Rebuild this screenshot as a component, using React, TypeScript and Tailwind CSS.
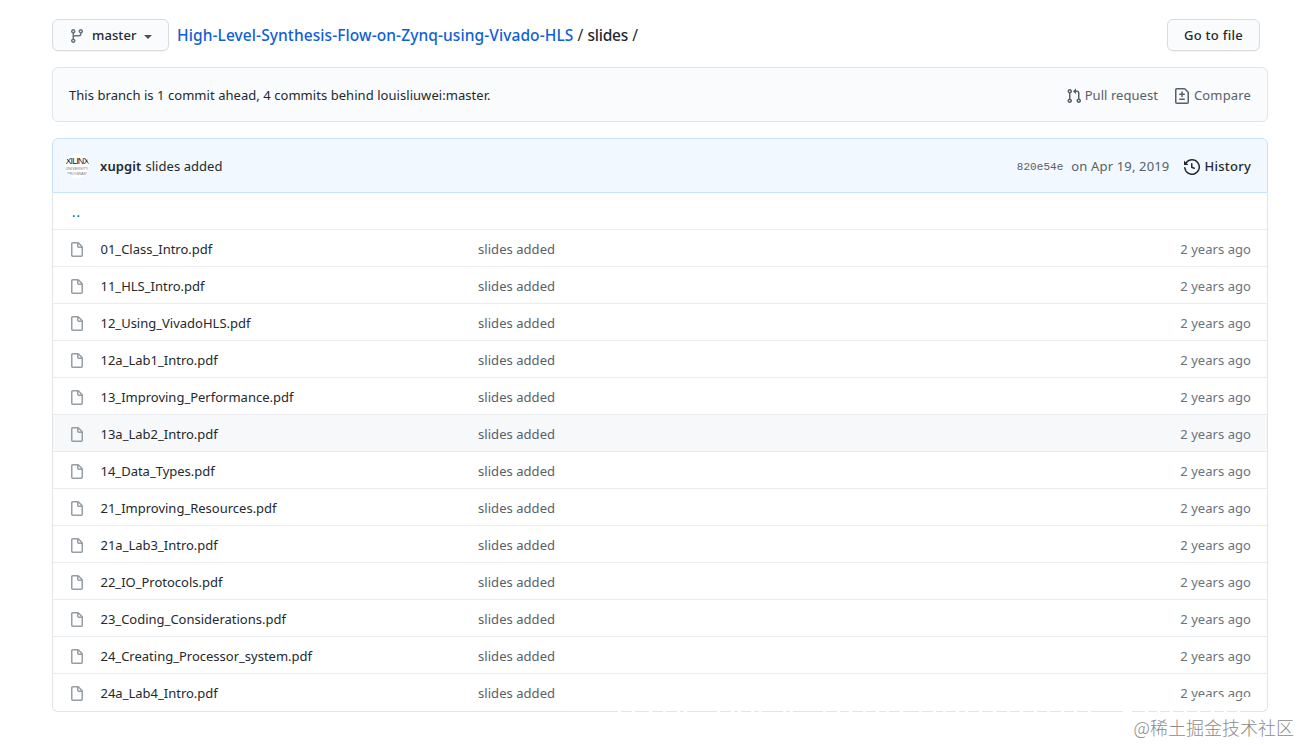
import React from 'react';

const files = [
  '01_Class_Intro.pdf',
  '11_HLS_Intro.pdf',
  '12_Using_VivadoHLS.pdf',
  '12a_Lab1_Intro.pdf',
  '13_Improving_Performance.pdf',
  '13a_Lab2_Intro.pdf',
  '14_Data_Types.pdf',
  '21_Improving_Resources.pdf',
  '21a_Lab3_Intro.pdf',
  '22_IO_Protocols.pdf',
  '23_Coding_Considerations.pdf',
  '24_Creating_Processor_system.pdf',
  '24a_Lab4_Intro.pdf',
];

// breaks in the bottom border, from its left end
const gaps = [
  0, 14, 31, 45, 59, 66, 99, 113, 120, 133, 141, 165, 172, 205, 219, 231, 245, 258, 268, 282, 301, 315, 325, 338, 347, 361,
  375, 389, 402, 416, 429, 443, 456, 470, 505, 508, 511, 527, 539, 552, 566, 579, 593, 606, 619,
];

const icons = {
  branch:
    'M11.75 2.5a.75.75 0 100 1.5.75.75 0 000-1.5zm-2.25.75a2.25 2.25 0 113 2.122V6A2.5 2.5 0 0110 8.5H6a1 1 0 00-1 1v1.128a2.251 2.251 0 11-1.5 0V5.372a2.25 2.25 0 111.5 0v1.836A2.492 2.492 0 016 7h4a1 1 0 001-1v-.628A2.25 2.25 0 019.5 3.25zM4.25 12a.75.75 0 100 1.5.75.75 0 000-1.5zM3.5 3.25a.75.75 0 111.5 0 .75.75 0 01-1.5 0z',
  pullRequest:
    'M7.177 3.073L9.573.677A.25.25 0 0110 .854v4.792a.25.25 0 01-.427.177L7.177 3.427a.25.25 0 010-.354zM3.75 2.5a.75.75 0 100 1.5.75.75 0 000-1.5zm-2.25.75a2.25 2.25 0 113 2.122v5.256a2.251 2.251 0 11-1.5 0V5.372A2.25 2.25 0 011.5 3.25zM11 2.5h-1V4h1a1 1 0 011 1v5.628a2.251 2.251 0 101.5 0V5A2.5 2.5 0 0011 2.5zm1 10.25a.75.75 0 111.5 0 .75.75 0 01-1.5 0zM3.75 12a.75.75 0 100 1.5.75.75 0 000-1.5z',
  fileDiff:
    'M2.75 1.5a.25.25 0 00-.25.25v12.5c0 .138.112.25.25.25h10.5a.25.25 0 00.25-.25V4.664a.25.25 0 00-.073-.177l-2.914-2.914a.25.25 0 00-.177-.073H2.75zM1 1.75C1 .784 1.784 0 2.75 0h7.586c.464 0 .909.184 1.237.513l2.914 2.914c.329.328.513.773.513 1.237v9.586A1.75 1.75 0 0113.25 16H2.75A1.75 1.75 0 011 14.25V1.75zm7 1.5a.75.75 0 01.75.75v1.5h1.5a.75.75 0 010 1.5h-1.5v1.5a.75.75 0 01-1.5 0V7h-1.5a.75.75 0 010-1.5h1.5V4A.75.75 0 018 3.25zm-3 8a.75.75 0 01.75-.75h4.5a.75.75 0 010 1.5h-4.5a.75.75 0 01-.75-.75z',
  history:
    'M1.643 3.143L.427 1.927A.25.25 0 000 2.104V5.75c0 .138.112.25.25.25h3.646a.25.25 0 00.177-.427L2.715 4.215a6.5 6.5 0 11-1.18 4.458.75.75 0 10-1.493.154 8.001 8.001 0 101.6-5.684zM7.75 4a.75.75 0 01.75.75v2.992l2.028.812a.75.75 0 01-.557 1.392l-2.5-1A.75.75 0 017 8.25v-3.5A.75.75 0 017.75 4z',
  file: 'M3.75 1.5a.25.25 0 00-.25.25v11.5c0 .138.112.25.25.25h8.5a.25.25 0 00.25-.25V6H9.75A1.75 1.75 0 018 4.25V1.5H3.75zm5.75.56v2.19c0 .138.112.25.25.25h2.19L9.5 2.06zM2 1.75C2 .784 2.784 0 3.75 0h5.086c.464 0 .909.184 1.237.513l3.414 3.414c.329.328.513.773.513 1.237v8.086A1.75 1.75 0 0112.25 15h-8.5A1.75 1.75 0 012 13.25V1.75z',
};

function Icon({ name, className }: { name: keyof typeof icons; className?: string }) {
  return (
    <svg viewBox="0 0 16 16" width="16" height="16" fill="currentColor" fillRule="evenodd" className={`shrink-0 ${className ?? ''}`}>
      <path d={icons[name]} />
    </svg>
  );
}

export default function App() {
  return (
    <div className="relative h-[745px] w-[1300px] overflow-hidden bg-white pl-[52px] pr-8 pt-[19px] font-['Noto_Sans',sans-serif] text-[13px] leading-5 tracking-[0.05px] text-[#24292e]">
      {/* Branch picker and breadcrumb */}
      <div className="flex h-8 items-center">
        <button className="flex h-8 w-[117px] items-center rounded-md border border-[#d9dcdf] bg-[#fafbfc] pl-4 font-medium shadow-[0_1px_0_rgba(27,31,35,0.04)]">
          <Icon name="branch" className="mt-px text-[#6a737d]" />
          <span className="ml-[7px] tracking-[0.1px]">master</span>
          <span className="ml-[7px] mt-1 border-x-4 border-t-4 border-x-transparent border-t-[#4c5157]" />
        </button>
        <div className="ml-2 flex whitespace-pre text-[15.5px] leading-6">
          <a className="font-medium tracking-[0.09px] text-[#0f60d6]">High-Level-Synthesis-Flow-on-Zynq-using-Vivado-HLS</a>
          <span> / </span>
          <span className="font-medium tracking-[-0.2px]">slides</span>
          <span> /</span>
        </div>
        <button className="ml-auto mr-2 h-8 w-[93px] rounded-md border border-[#d9dcdf] bg-[#fafbfc] font-medium tracking-[0.3px] shadow-[0_1px_0_rgba(27,31,35,0.04)]">
          Go to file
        </button>
      </div>

      {/* Branch status */}
      <div className="mt-4 flex h-[55px] items-center rounded-md border border-[#e1e4e8] bg-[#fafbfc] px-4 pt-px">
        <span>This branch is 1 commit ahead, 4 commits behind louisliuwei:master.</span>
        <a className="ml-auto flex items-center tracking-[0.05px] text-[#586069]">
          <Icon name="pullRequest" className="mr-[3px] mt-px" />
          Pull request
        </a>
        <a className="ml-4 flex items-center tracking-[0.15px] text-[#586069]">
          <Icon name="fileDiff" className="mr-1 mt-px" />
          Compare
        </a>
      </div>

      {/* Latest commit */}
      <div className="mt-4 flex h-[55px] items-center rounded-t-md border border-[#c8e1ff] bg-[#f1f8ff] pl-3 pr-4 pt-px">
        <div className="flex size-6 flex-col items-center overflow-hidden rounded-full bg-white pt-[2px] font-['Liberation_Sans',sans-serif] tracking-normal">
          <span className="text-[9px] leading-[11px] tracking-[-0.9px]">XILINX</span>
          <span className="text-[3.8px] leading-[5px] text-[#777]">UNIVERSITY</span>
          <span className="text-[3.8px] leading-[5px] text-[#777]">PROGRAM</span>
        </div>
        <span className="ml-[11px] font-semibold tracking-[0.1px]">xupgit</span>
        <span className="ml-1">slides added</span>
        <span className="ml-auto pt-0.5 font-['Liberation_Mono',monospace] text-[11px] text-[#586069]">820e54e</span>
        <span className="ml-2 tracking-[0.15px] text-[#586069]">on Apr 19, 2019</span>
        <a className="ml-[15px] flex items-center font-medium tracking-[0.25px]">
          <Icon name="history" className="mr-1 mt-0.5" />
          History
        </a>
      </div>

      {/* File list */}
      <div className="overflow-hidden rounded-b-md border border-t-0 border-[#e1e4e8]">
        <div className="flex h-9 items-center pl-[19px] pt-px font-medium tracking-[1px] text-[#0366d6]">..</div>
        {files.map((file) => (
          <div
            key={file}
            className={`flex h-[37px] items-center border-t border-[#eaecef] px-4 pt-px last:h-[38px] last:pb-px ${
              file === '13a_Lab2_Intro.pdf' ? 'bg-[#f6f8fa]' : ''
            }`}
          >
            <Icon name="file" className="mt-[3px] text-[#959da5]" />
            <span className="ml-[15.5px] w-[377.5px] tracking-[0]">{file}</span>
            <span className="text-[#586069]">slides added</span>
            <span className="ml-auto text-[#6a737d]">2 years ago</span>
          </div>
        ))}
      </div>

      {/* Watermark */}
      <div className="absolute left-[618px] top-[711px]">
        {gaps.map((x) => (
          <span key={x} className="absolute h-px w-[3px] bg-white" style={{ left: x }} />
        ))}
      </div>
      <div className="absolute left-[1188px] top-[697px] h-px w-[63px] bg-white" />
      <div className="absolute right-[6px] top-[713px] font-['Noto_Sans_CJK_SC',sans-serif] text-[18px] font-light leading-7 tracking-normal text-[#8c8c8c]">
        @稀土掘金技术社区
      </div>
    </div>
  );
}
